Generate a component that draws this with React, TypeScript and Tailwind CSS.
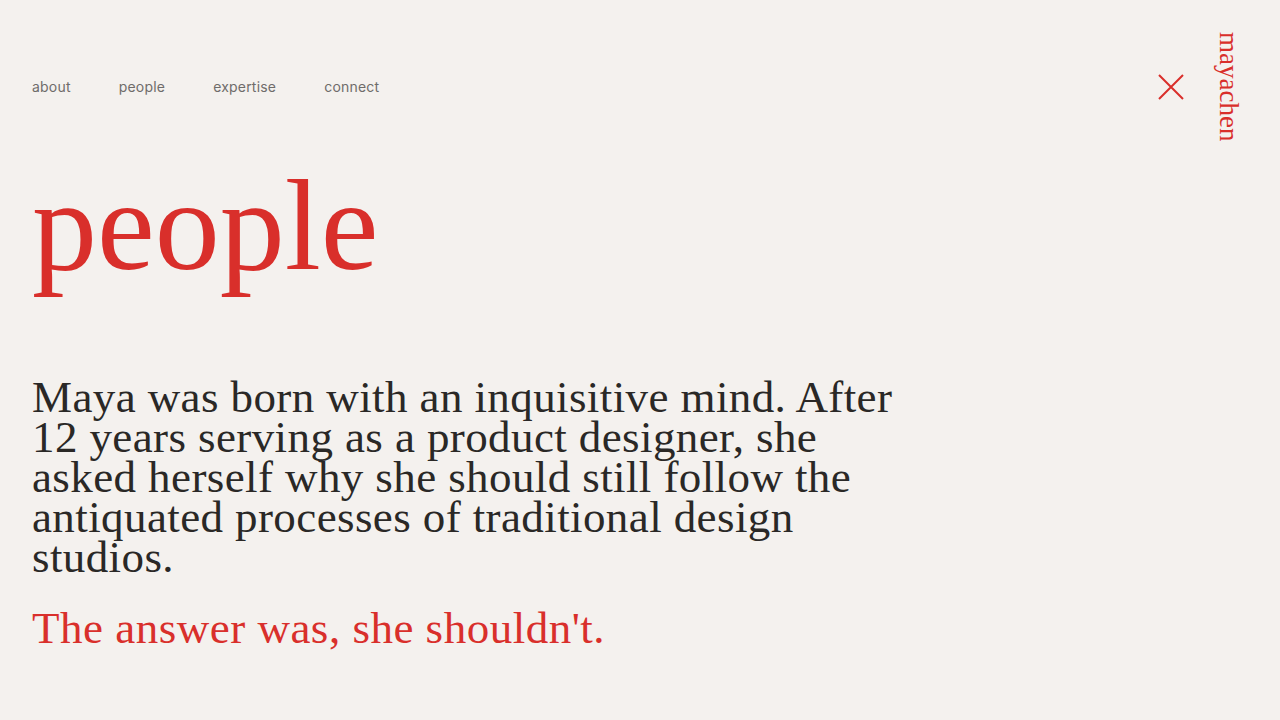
// People page: nav, big serif heading, intro copy
const serif = "font-['Liberation_Serif','Times_New_Roman',serif]";

const links = ['about', 'people', 'expertise', 'connect'];

export default function App() {
    return (
        <div className="min-h-screen w-full bg-[#f4f1ee] px-8 pb-16">
            {/* Header */}
            <header className="flex items-start justify-between pt-8">
                <nav className="mt-[46px] flex gap-12 font-['Inter','Liberation_Sans',sans-serif] text-[14px] leading-[18px] tracking-[0.2px] text-[#6f6c6a]">
                    {links.map(l => (
                        <a key={l} href="#" className="block">
                            {l}
                        </a>
                    ))}
                </nav>
                <div className="flex items-start gap-[33px] pr-[7px]">
                    <button aria-label="Close menu" className="mt-[42px] h-[26px] w-[26px] text-[#d92f2b]">
                        <svg viewBox="0 0 26 26" className="h-full w-full" fill="none" stroke="currentColor" strokeWidth={2}>
                            <path d="M1 1l24 24M25 1L1 25" />
                        </svg>
                    </button>
                    <span className={`${serif} text-[27px] leading-[24px] text-[#d92f2b] [writing-mode:vertical-rl]`}>
                        mayachen
                    </span>
                </div>
            </header>

            {/* Title */}
            <h1 className={`${serif} mt-[19px] text-[130px] leading-none text-[#d92f2b]`}>people</h1>

            {/* Intro */}
            <p className={`${serif} mt-[87px] text-[45px] leading-[40px] tracking-[0.4px] text-[#2a2826]`}>
                Maya was born with an inquisitive mind. After
                <br />
                12 years serving as a product designer, she
                <br />
                asked herself why she should still follow the
                <br />
                antiquated processes of traditional design
                <br />
                studios.
            </p>
            <p className={`${serif} mt-[31px] text-[45px] leading-[40px] tracking-[0.5px] text-[#d92f2b]`}>
                The answer was, she shouldn't.
            </p>
        </div>
    );
}
